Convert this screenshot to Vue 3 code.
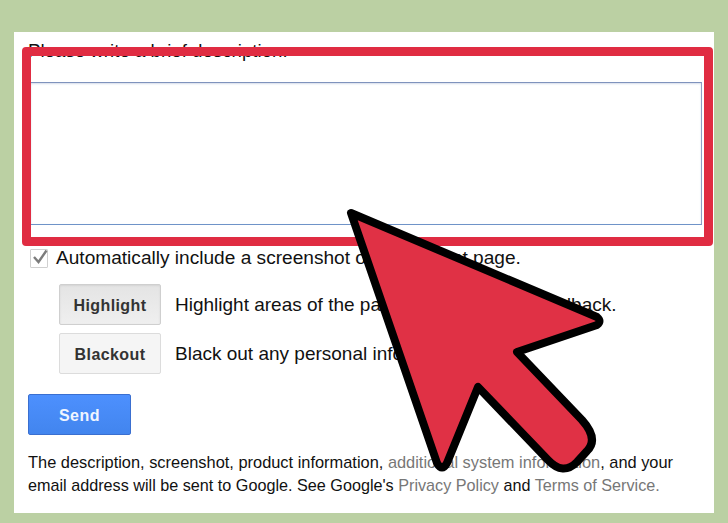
<template>
  <div class="page">
    <div class="card">
      <p class="prompt">Please write a brief description:</p>
      <div class="textarea"></div>
      <label class="check-row">
        <span class="checkbox">
          <svg width="17" height="17" viewBox="0 0 17 17">
            <path d="M3 8 L7.5 13 L15.5 1.5" fill="none" stroke="#7c7c7c" stroke-width="2.4" />
          </svg>
        </span>
        <span>Automatically include a screenshot of the current page.</span>
      </label>
      <div class="tool-row">
        <button class="tool-btn pressed">Highlight</button>
        <span>Highlight areas of the page related to your feedback.</span>
      </div>
      <div class="tool-row second">
        <button class="tool-btn">Blackout</button>
        <span>Black out any personal information.</span>
      </div>
      <button class="send">Send</button>
      <p class="legal">
        <span class="first-line">The description, screenshot, product information,
        <a>additional system information</a>, and your</span><br>
        email address will be sent to Google. See Google's
        <a>Privacy Policy</a> and <a>Terms of Service.</a>
      </p>
    </div>

    <!-- red annotation over the screenshot -->
    <div class="highlight-box"></div>
    <svg class="arrow" width="728" height="523" viewBox="0 0 728 523">
      <path
        d="M351 213 L597 317 Q602 321 597 325 L517 352 L582 420 Q599 439 587 451 L577 462 Q563 476 548 460 L478 387 L447 463 Q442 472 437 463 Z"
        fill="#e03145"
        stroke="#000"
        stroke-width="8"
        stroke-linejoin="round"
      />
    </svg>
  </div>
</template>

<script setup>
</script>

<style>
html, body {
  margin: 0;
}
</style>

<style scoped>
.page {
  position: relative;
  width: 728px;
  height: 523px;
  box-sizing: border-box;
  padding: 32px 14px 10px 14px;
  background: #bbd0a3;
  overflow: hidden;
  font-family: "Liberation Sans", Arial, sans-serif;
  color: #111;
}

.card {
  height: 481px;
  box-sizing: border-box;
  padding: 9px 12px 0 14px;
  background: #fff;
  font-size: 19px;
}

.prompt {
  margin: 0;
  font-size: 18.7px;
  line-height: 20px;
}

.textarea {
  height: 141px;
  margin: 21px 0 0 2px;
  border: 1px solid #8e9fc4;
  border-top-color: #7f93bd;
  border-bottom-color: #6f93c8;
  box-shadow: inset 0 1px 2px #d5dcea;
}

.check-row {
  display: flex;
  align-items: center;
  gap: 8px;
  height: 20px;
  margin-top: 23px;
  margin-left: 2px;
  font-size: 19.1px;
}

.checkbox {
  display: block;
  width: 16px;
  height: 17px;
  border: 1px solid #d0d0d0;
  border-radius: 1px;
}

.checkbox svg {
  display: block;
  margin-top: -1px;
}

.tool-row {
  display: flex;
  align-items: center;
  gap: 14px;
  margin-top: 16px;
  margin-left: 31px;
}

.tool-row.second {
  margin-top: 8px;
}

.tool-btn {
  width: 102px;
  height: 41px;
  padding: 2px 0 0;
  border: 1px solid #dcdcdc;
  border-radius: 2px;
  background: #f5f5f5;
  color: #333;
  font-family: "Liberation Sans", Arial, sans-serif;
  font-size: 16px;
  font-weight: bold;
  letter-spacing: 0.4px;
}

.tool-btn.pressed {
  border-color: #cfcfcf;
  background: linear-gradient(#e4e4e4, #efefef);
  box-shadow: inset 0 1px 2px #d4d4d4;
}

.send {
  display: block;
  width: 103px;
  height: 41px;
  margin-top: 20px;
  padding: 2px 0 0;
  border: 1px solid #3a6fd0;
  border-radius: 2px;
  background: linear-gradient(#4d90fe, #4285ee);
  color: #f0f5ff;
  font-family: "Liberation Sans", Arial, sans-serif;
  font-size: 16px;
  font-weight: bold;
  letter-spacing: 0.5px;
}

.legal {
  margin: 16px 0 0;
  font-size: 16.2px;
  line-height: 23px;
  white-space: nowrap;
}

.first-line {
  font-size: 16.4px;
}

.legal a {
  color: #777;
}

.highlight-box {
  position: absolute;
  left: 22px;
  top: 47px;
  width: 691px;
  height: 199px;
  box-sizing: border-box;
  border: 9px solid #e02c42;
  border-radius: 4px;
}

.arrow {
  position: absolute;
  left: 0;
  top: 0;
}
</style>
